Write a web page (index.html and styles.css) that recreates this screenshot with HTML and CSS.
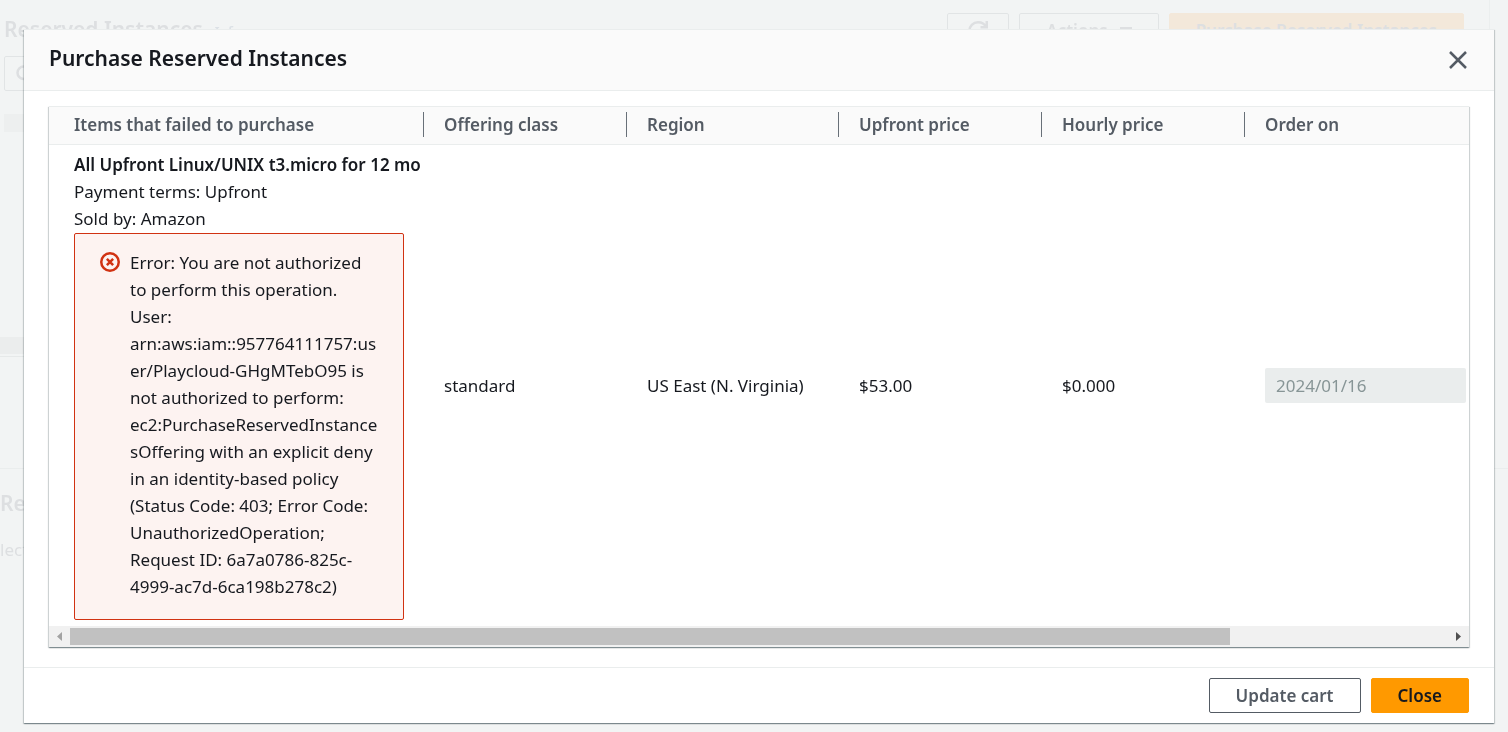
FILE: index.html
```
<!DOCTYPE html>
<html lang="en">
<head>
<meta charset="utf-8">
<title>Purchase Reserved Instances</title>
<link rel="stylesheet" href="styles.css">
</head>
<body>
<div class="page" aria-hidden="true">
  <div class="panel">
    <div class="toolbar">
      <h2 class="page-title">Reserved Instances</h2>
      <span class="info">Info</span>
      <div class="toolbar-actions">
        <button class="ghost ghost-icon" tabindex="-1" aria-label="Refresh"><svg width="20" height="20" viewBox="0 0 16 16" fill="none" stroke="currentColor" stroke-width="2"><path d="M10 5h5V0M15 8a7 7 0 1 1-7-7c3 0 5.500 1.700 6.400 4"/></svg></button>
        <button class="ghost" tabindex="-1">Actions <svg width="12" height="8" viewBox="0 0 12 8" fill="currentColor"><path d="M0 0h12v2L6 8 0 2z"/></svg></button>
        <button class="ghost ghost-primary" tabindex="-1">Purchase Reserved Instances</button>
      </div>
    </div>
    <div class="search"><svg width="20" height="20" viewBox="0 0 16 16" fill="none" stroke="currentColor" stroke-width="2"><circle cx="7" cy="7" r="5"/><path d="m11 11 4 4"/></svg></div>
    <div class="chip"></div>
    <div class="track"></div>
  </div>
  <div class="split">
    <h2 class="split-title">Reserved</h2>
    <p class="split-text">lect an</p>
  </div>
</div>

<div class="overlay">
  <section class="modal" role="dialog" aria-modal="true" aria-labelledby="modal-title">
    <header class="modal-header">
      <h1 class="modal-title" id="modal-title">Purchase Reserved Instances</h1>
      <button class="dismiss" aria-label="Close dialog"><svg width="20" height="20" viewBox="0 0 20 20" fill="none" stroke="currentColor" stroke-width="2.500"><path d="m2 2 16 16M18 2 2 18"/></svg></button>
    </header>
    <div class="modal-body">
      <div class="table-card">
        <div class="table-view">
          <table class="items">
            <colgroup><col class="col-item"><col class="col-mid"><col class="col-region"><col class="col-mid"><col class="col-mid"><col></colgroup>
            <thead>
              <tr>
                <th scope="col"><span class="head">Items that failed to purchase</span></th>
                <th scope="col"><span class="head">Offering class</span></th>
                <th scope="col"><span class="head">Region</span></th>
                <th scope="col"><span class="head">Upfront price</span></th>
                <th scope="col"><span class="head">Hourly price</span></th>
                <th scope="col" id="order-on"><span class="head">Order on</span></th>
              </tr>
            </thead>
            <tbody>
              <tr>
                <td class="item">
                  <div class="item-name">All Upfront Linux/UNIX t3.micro for 12 mo</div>
                  <div>Payment terms: Upfront</div>
                  <div>Sold by: Amazon</div>
                  <div class="alert" role="alert">
                    <svg class="alert-icon" width="20" height="20" viewBox="0 0 16 16" fill="none" stroke="currentColor" stroke-width="2"><circle cx="8" cy="8" r="7"/><path d="m5.500 5.500 5 5M10.500 5.500l-5 5"/></svg>
                    <p class="alert-text">Error: You are not authorized<br>to perform this operation.<br>User:<br>arn:aws:iam::957764111757:us<br>er/Playcloud-GHgMTebO95 is<br>not authorized to perform:<br>ec2:PurchaseReservedInstance<br>sOffering with an explicit deny<br>in an identity-based policy<br>(Status Code: 403; Error Code:<br>UnauthorizedOperation;<br>Request ID: 6a7a0786-825c-<br>4999-ac7d-6ca198b278c2)</p>
                  </div>
                </td>
                <td>standard</td>
                <td>US East (N. Virginia)</td>
                <td>$53.00</td>
                <td>$0.000</td>
                <td><input class="date" type="text" value="2024/01/16" aria-labelledby="order-on" disabled></td>
              </tr>
            </tbody>
          </table>
        </div>
        <div class="scrollbar">
          <svg class="arrow arrow-off" width="21" height="21" viewBox="0 0 21 21"><path d="M13 6v9l-5-4.500z"/></svg>
          <div class="scroll-track"><div class="scroll-thumb"></div></div>
          <svg class="arrow" width="21" height="21" viewBox="0 0 21 21"><path d="M8 6v9l5-4.500z"/></svg>
        </div>
      </div>
    </div>
    <footer class="modal-footer">
      <button class="btn">Update cart</button>
      <button class="btn btn-primary">Close</button>
    </footer>
  </section>
</div>
</body>
</html>
```
FILE: styles.css
```
* { box-sizing: border-box; }

body {
  margin: 0;
  min-height: 100vh;
  overflow: hidden;
  background: #f2f4f4;
  color: #16191f;
  font: 17px/27px "Noto Sans", "Open Sans", sans-serif;
}

h1, h2, p { margin: 0; }
button, input { font: inherit; }
svg { display: block; }

/* Dimmed page behind the dialog */
.page {
  position: fixed;
  inset: 0;
  color: #dddfe1;
  overflow: hidden;
}
.panel {
  height: 357px;
  margin-right: 18px;
  border-right: 1px solid #ebeeee;
  border-bottom: 1px solid #e6e9e9;
}
.toolbar {
  display: flex;
  align-items: flex-start;
  height: 48px;
  padding: 13px 25px 0 4px;
}
.page-title, .split-title { font-size: 21px; font-weight: 600; line-height: 32px; }
.info { margin-left: 12px; font-size: 13px; font-weight: 600; line-height: 36px; color: #dce1e6; }
.toolbar-actions { display: flex; gap: 10px; margin-left: auto; }
.ghost {
  display: flex;
  align-items: center;
  gap: 12px;
  height: 35px;
  padding: 0 26px;
  border: 1px solid #e1e4e5;
  border-radius: 2px;
  background: none;
  color: inherit;
  font-weight: 600;
}
.ghost-icon { padding: 0 20px; }
.ghost-primary { border-color: #f3e8da; background: #f3e8da; }
.search {
  height: 35px;
  margin: 8px 25px 0 4px;
  padding: 7px 10px;
  border: 1px solid #e1e4e5;
  border-radius: 2px;
}
.chip { width: 60px; height: 18px; margin: 23px 0 0 4px; background: #edefef; }
.track { height: 17px; margin-top: 205px; background: #ebeded; }
.split {
  margin-top: 111px;
  padding-top: 18px;
  border-top: 1px solid #eaeded;
}
.split-text { margin-top: 17px; }

/* Dialog */
.overlay {
  position: relative;
  padding: 29px 14px 9px 24px;
}
.modal {
  background: #fff;
  border-top: 1px solid #eaeded;
  box-shadow: 0 1px 1px 0 rgba(0, 28, 36, 0.3), 1px 1px 1px 0 rgba(0, 28, 36, 0.15), -1px 1px 1px 0 rgba(0, 28, 36, 0.15);
}
.modal-header {
  display: flex;
  align-items: center;
  justify-content: space-between;
  padding: 12px 24px 16px 25px;
  background: #fafafa;
  border-bottom: 1px solid #eaeded;
}
.modal-title { font-size: 21px; font-weight: 600; line-height: 32px; }
.dismiss {
  padding: 4px 2px 0;
  border: 0;
  background: none;
  color: #545b64;
}
.modal-body { padding: 15px 25px 20px; }
.table-card {
  background: #fff;
  border-top: 1px solid #eaeded;
  box-shadow: 0 1px 1px 0 rgba(0, 28, 36, 0.3), 1px 1px 1px 0 rgba(0, 28, 36, 0.15), -1px 1px 1px 0 rgba(0, 28, 36, 0.15);
}
.table-view { overflow: hidden; }
.items {
  width: 1688px;
  table-layout: fixed;
  border-collapse: separate;
  border-spacing: 0;
}
.col-item { width: 375px; }
.col-mid { width: 203px; }
.col-region { width: 212px; }
.items th {
  height: 38px;
  padding: 0 0 2px;
  background: #fafafa;
  border-bottom: 1px solid #eaeded;
  color: #545b64;
  font-weight: 600;
  text-align: left;
}
.head {
  display: block;
  padding-left: 20px;
  line-height: 25px;
  border-right: 1px solid #687078;
}
.items th:first-child .head { padding-left: 25px; }
.items th:last-child .head { border-right: 0; }
.items td { padding: 0 0 0 20px; vertical-align: middle; }
.items .item { padding: 6px 0 6px 25px; }
.item-name { font-weight: 600; white-space: nowrap; overflow: hidden; }
.alert {
  display: flex;
  gap: 10px;
  margin: 1px 20px 0 0;
  padding: 15px 20px 19px 25px;
  border: 1px solid #d13212;
  border-radius: 2px;
  background: #fdf3f1;
}
.alert-icon { flex: none; margin-top: 3px; color: #d13212; }
.alert-text { white-space: nowrap; }
.date {
  display: block;
  width: 201px;
  height: 35px;
  padding: 0 11px;
  border: 0;
  border-radius: 2px;
  background: #eaeded;
  color: #879596;
}
.scrollbar { display: flex; background: #f1f1f1; }
.arrow { flex: none; fill: #505050; }
.arrow-off { fill: #a3a3a3; }
.scroll-track { flex: 1; padding: 2px 0; }
.scroll-thumb { width: calc(100% * 1421 / 1688); height: 17px; background: #c1c1c1; }

.modal-footer {
  display: flex;
  justify-content: flex-end;
  gap: 10px;
  padding: 10px 25px;
  border-top: 1px solid #eaeded;
}
.btn {
  height: 35px;
  padding: 0 26px;
  border: 1px solid #545b64;
  border-radius: 2px;
  background: #fff;
  color: #545b64;
  font-weight: 600;
}
.btn-primary { border-color: #f90; background: #f90; color: #16191f; }
```
